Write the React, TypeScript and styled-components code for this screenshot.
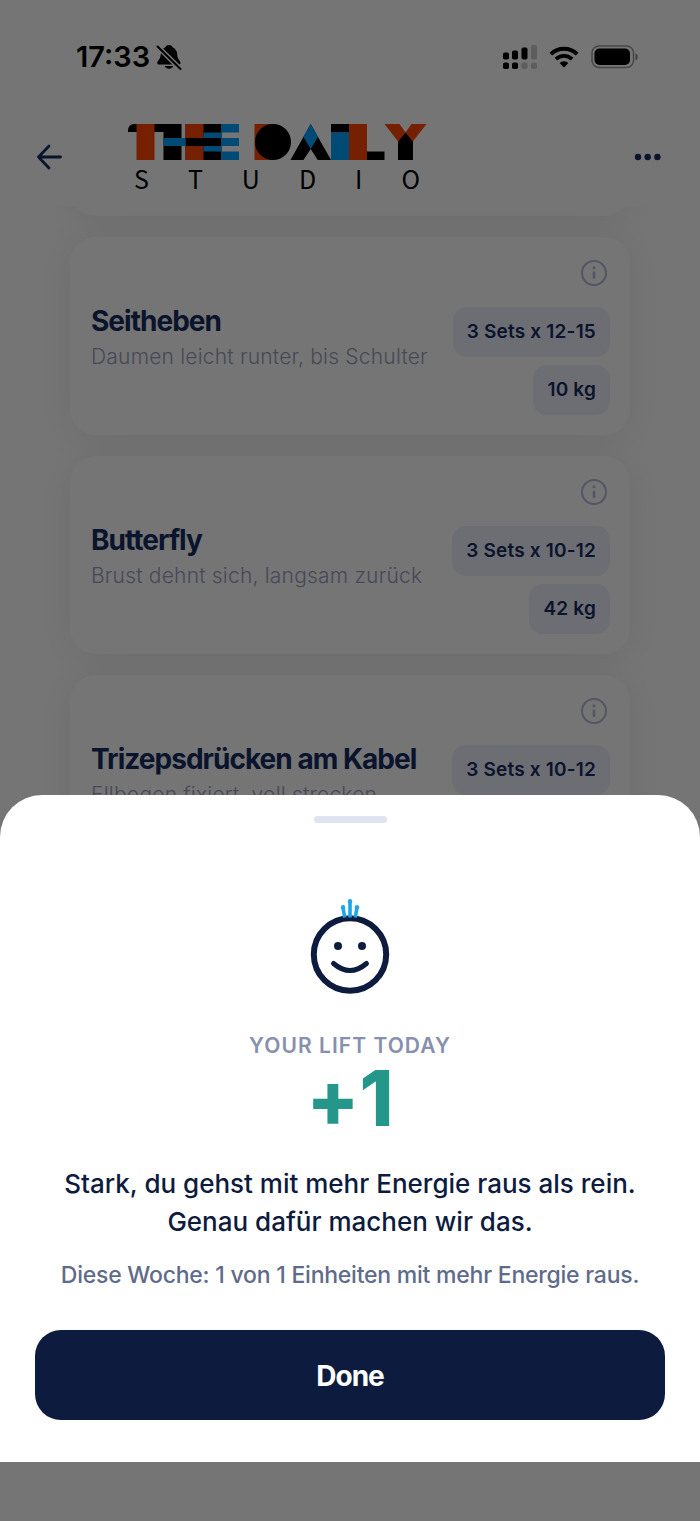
import React from "react";
import styled, { createGlobalStyle } from "styled-components";

const GlobalStyle = createGlobalStyle`
  *, *::before, *::after { box-sizing: border-box; }
  body {
    margin: 0;
    background: #ffffff;
    color: #0d1b3e;
    font-family: Inter, "Liberation Sans", sans-serif;
    -webkit-font-smoothing: antialiased;
  }
  h1, h2, p, ul { margin: 0; padding: 0; }
  button { font: inherit; color: inherit; border: 0; background: none; padding: 0; cursor: pointer; }
`;

const Screen = styled.div`
  min-height: 100vh;
  overflow: hidden;
  color: #162c62;
`;

const TopArea = styled.header`
  position: relative;
  z-index: 1;
  background: #ffffff;
`;

const StatusBar = styled.div`
  display: flex;
  align-items: center;
  justify-content: space-between;
  height: 114px;
  padding: 0 61px 0 76px;
  color: #000000;
`;

const StatusGroup = styled.div<{ $gap: number }>`
  display: flex;
  align-items: center;
  gap: ${({ $gap }) => $gap}px;
`;

const Clock = styled.time`
  font-size: 29px;
  line-height: 36px;
  font-weight: 600;
`;

const NavBar = styled.nav`
  display: grid;
  grid-template-columns: 92px 1fr 92px;
  align-items: start;
  height: 92px;
  padding: 8px 38px 0 36px;
`;

const IconButton = styled.button<{ $end?: boolean }>`
  display: flex;
  align-items: center;
  justify-content: ${({ $end }) => ($end ? "flex-end" : "flex-start")};
  height: 69px;
`;

const Brand = styled.div`
  width: 300px;
`;

const Wordmark = styled.svg`
  display: block;
  margin-top: 2px;
`;

const BrandSub = styled.div`
  display: flex;
  justify-content: space-between;
  padding: 0 8px 0 6px;
  color: #000000;
  font-family: "Noto Sans CJK JP", "Noto Sans", sans-serif;
  font-size: 25px;
  line-height: 36px;
`;

const Cards = styled.ul`
  display: flex;
  flex-direction: column;
  gap: 21px;
  margin: -50px 70px 0;
  list-style: none;
`;

const Card = styled.li`
  display: grid;
  grid-template-columns: 1fr auto;
  align-items: center;
  height: 198px;
  padding: 0 20px;
  border-radius: 26px;
  background: #ffffff;
  box-shadow: 0 4px 40px rgba(0, 0, 0, 0.08);
`;

const ScrolledCard = styled(Card)`
  height: 60px;
  border-radius: 0 0 26px 26px;
`;

const Exercise = styled.div`
  padding: 6px 0 0 1px;
`;

const ExerciseName = styled.h2`
  font-size: 28px;
  line-height: 36px;
  font-weight: 700;
  letter-spacing: -0.035em;
`;

const ExerciseHint = styled.p`
  color: #9aa0be;
  font-size: 21px;
  line-height: 36px;
  font-weight: 300;
  letter-spacing: 0.01em;
`;

const Meta = styled.div`
  display: flex;
  flex-direction: column;
  align-self: start;
  align-items: flex-end;
  gap: 8px;
  padding-top: 22px;
`;

const InfoButton = styled.button`
  display: flex;
  margin: 0 2px 12px 0;
`;

const Pill = styled.span`
  padding: 0 14px;
  border-radius: 14px;
  background: #eef0fa;
  font-size: 19px;
  line-height: 50px;
  font-weight: 600;
  letter-spacing: 0.01em;
  white-space: nowrap;
`;

const Backdrop = styled.div`
  position: fixed;
  inset: 0;
  z-index: 2;
  display: flex;
  flex-direction: column;
  justify-content: flex-end;
  padding-bottom: 59px;
  background: rgba(0, 0, 0, 0.54);
`;

const Sheet = styled.section`
  display: flex;
  flex-direction: column;
  align-items: center;
  padding: 21px 35px 42px;
  border-radius: 42px 42px 0 0;
  background: #ffffff;
  text-align: center;
`;

const Grabber = styled.div`
  width: 73px;
  height: 7px;
  margin-bottom: 74px;
  border-radius: 4px;
  background: #e0e4f0;
`;

const Eyebrow = styled.p`
  margin-top: 37px;
  color: #8790ad;
  font-size: 21px;
  line-height: 28px;
  font-weight: 600;
  letter-spacing: 0.05em;
`;

const Score = styled.p`
  color: #24978a;
  font-size: 77px;
  line-height: 76px;
  font-weight: 800;
  font-variant-ligatures: no-contextual;
`;

const Message = styled.h1`
  margin-top: 29px;
  font-size: 26px;
  line-height: 38px;
  font-weight: 500;
`;

const WeekNote = styled.p`
  margin-top: 18px;
  color: #5f6b8a;
  font-size: 23px;
  line-height: 32px;
  font-weight: 500;
  letter-spacing: -0.01em;
`;

const DoneButton = styled.button`
  align-self: stretch;
  height: 90px;
  margin-top: 39px;
  padding-top: 2px;
  border-radius: 26px;
  background: #0d1b3e;
  color: #ffffff;
  font-size: 28px;
  font-weight: 700;
  letter-spacing: -0.035em;
`;

const MutedBell = () => (
  <svg width="26" height="26" viewBox="0 0 26 26" aria-label="Silent mode" role="img">
    <mask id="bell-slash">
      <rect width="26" height="26" fill="#fff" />
      <path d="M0 1 26 26.500" stroke="#000" strokeWidth="5" />
    </mask>
    <g fill="#000" mask="url(#bell-slash)">
      <path d="M13 1c1.700 0 3 .9 3.500 2.200 3.200 1.300 4.700 4 4.700 7.500 0 4.600 3.300 5.600 3.300 8.300 0 1-.6 1.500-1.700 1.500H3C1.900 20.500 1.300 20 1.300 19c0-2.700 3.400-3.700 3.400-8.300 0-3.500 1.500-6.200 4.700-7.500C10 1.900 11.300 1 13 1z" />
      <path d="M8.800 22h8.400a4.300 3.500 0 0 1-8.400 0z" />
    </g>
    <path d="M1.500 2.500 24.500 25" stroke="#000" strokeWidth="2" strokeLinecap="round" />
  </svg>
);

const DualSignal = () => (
  <svg width="34" height="25" viewBox="0 0 34 25" aria-label="Signal" role="img">
    <g fill="#000">
      <rect x="0" y="7.500" width="6" height="7" rx="1.800" />
      <rect x="9" y="5.500" width="6" height="9" rx="1.800" />
      <rect x="18.500" y="2.500" width="6" height="12" rx="1.800" />
      <rect x="0" y="17.500" width="6" height="6.500" rx="1.800" />
      <rect x="9" y="17.500" width="6" height="6.500" rx="1.800" />
    </g>
    <g fill="#000" opacity=".2">
      <rect x="28" y="0" width="6" height="14.500" rx="1.800" />
      <rect x="18.500" y="17.500" width="6" height="6.500" rx="1.800" />
      <rect x="28" y="17.500" width="6" height="6.500" rx="1.800" />
    </g>
  </svg>
);

const Wifi = () => (
  <svg width="30" height="22" viewBox="0 0 30 22" aria-label="Wi-Fi" role="img">
    <g fill="none" stroke="#000" strokeWidth="3.800">
      <path d="M1.900 8.200a18.500 18.500 0 0 1 26.200 0" />
      <path d="M6.900 13.200a11.500 11.500 0 0 1 16.200 0" />
    </g>
    <path d="M15 21.500 10.600 17a6.300 6.300 0 0 1 8.800 0z" fill="#000" />
  </svg>
);

const Battery = () => (
  <svg width="48" height="24" viewBox="0 0 48 24" aria-label="Battery full" role="img">
    <rect x="1" y="1" width="41.500" height="21.500" rx="7" fill="none" stroke="#000" strokeOpacity=".4" strokeWidth="1.500" />
    <rect x="3.500" y="3.500" width="35.500" height="16.500" rx="5" fill="#000" />
    <path d="M44.500 8.200c3 1.300 3 6 0 7.300z" fill="#000" opacity=".45" />
  </svg>
);

const BackArrow = () => (
  <svg width="26" height="26" viewBox="0 0 26 26" fill="none" stroke="currentColor" strokeWidth="2.800" strokeLinecap="round" strokeLinejoin="round" aria-hidden="true">
    <path d="M24.500 13H2.500M13 2 2.500 13 13 24" />
  </svg>
);

const Dots = () => (
  <svg width="28" height="8" viewBox="0 0 28 8" fill="currentColor" aria-hidden="true">
    <circle cx="4" cy="4" r="3.200" />
    <circle cx="13.700" cy="4" r="3.200" />
    <circle cx="23.400" cy="4" r="3.200" />
  </svg>
);

const InfoIcon = () => (
  <svg width="28" height="28" viewBox="0 0 28 28" fill="none" stroke="#b4b9d8" strokeWidth="2" strokeLinecap="round" aria-hidden="true">
    <circle cx="14" cy="14" r="12" />
    <path d="M14 13.800v5" strokeWidth="2.600" />
    <circle cx="14" cy="8.700" r="1.500" fill="#b4b9d8" stroke="none" />
  </svg>
);

const DailyMark = () => (
  <Wordmark width="300" height="36" viewBox="0 0 300 36" role="img" aria-label="The Daily">
    <path d="M0 8V6a6 6 0 0 1 6-6h47.500v36H35.500V8z" fill="#000" />
    <path d="M8.500 0h18v36h-18z" fill="#ff4804" />
    <path d="M35.500 14h22v8h-22z" fill="#00a3ff" />
    <path d="M57.500 0h36v36h-36z" fill="#000" />
    <path d="M57.500 0h18v14h-18zM57.500 22h18v14h-18z" fill="#ff4804" />
    <path d="M75.500 8.500h18V14h-18zM75.500 22h18v5.500h-18z" fill="#00a3ff" />
    <path d="M93.500 0h17.500v8.500H93.500zM93.500 14h17.500v8H93.500zM93.500 27.500h17.500V36H93.500z" fill="#00a3ff" />
    <path d="M126.500 0h18v36h-18z" fill="#ff4804" />
    <circle cx="145" cy="18" r="18" fill="#000" />
    <path d="M182.700 0 203 36h-13.300L182.700 25 175.500 36h-13z" fill="#000" />
    <path d="M182.700 0 190 13l-7.300 12-7.300-12z" fill="#00a3ff" />
    <path d="M203 0h18v8.500h-18z" fill="#000" />
    <path d="M203 8.500h18V36h-18z" fill="#00a3ff" />
    <path d="M221 0h18v36h-18z" fill="#ff4804" />
    <path d="M239 27.500h17.500V36H239z" fill="#000" />
    <path d="M256.500 0h15l6 8.500L283.500 0h15l-14 18h-14z" fill="#ff4804" />
    <path d="M277.500 8.500 285 18v18h-15V18z" fill="#000" />
  </Wordmark>
);

const Smiley = () => (
  <svg width="80" height="98" viewBox="0 0 80 98" fill="none" role="img" aria-label="Smiling face">
    <circle cx="40" cy="57.500" r="36.200" stroke="#0d1b3e" strokeWidth="6" />
    <circle cx="28" cy="49" r="4" fill="#0d1b3e" />
    <circle cx="52" cy="49" r="4" fill="#0d1b3e" />
    <path d="M23.500 66.500q16.500 14 33 0" stroke="#0d1b3e" strokeWidth="5" strokeLinecap="round" />
    <g stroke="#1ea7e8" strokeWidth="3.600">
      <path d="M34.700 20.500 33 10.500M40 20.500V4.500M45.300 20.500 47 10.500" />
    </g>
    <g fill="#1ea7e8">
      <circle cx="33" cy="10.300" r="2.200" />
      <circle cx="40" cy="4.300" r="2.200" />
      <circle cx="47" cy="10.300" r="2.200" />
    </g>
  </svg>
);

const exercises = [
  { name: "Seitheben", hint: "Daumen leicht runter, bis Schulter", sets: "3 Sets x 12-15", weight: "10 kg" },
  { name: "Butterfly", hint: "Brust dehnt sich, langsam zurück", sets: "3 Sets x 10-12", weight: "42 kg" },
  { name: "Trizepsdrücken am Kabel", hint: "Ellbogen fixiert, voll strecken", sets: "3 Sets x 10-12", weight: "" },
];

export default function App() {
  return (
    <>
      <GlobalStyle />
      <Screen>
        <TopArea>
          <StatusBar>
            <StatusGroup $gap={6}>
              <Clock>17:33</Clock>
              <MutedBell />
            </StatusGroup>
            <StatusGroup $gap={12}>
              <DualSignal />
              <Wifi />
              <Battery />
            </StatusGroup>
          </StatusBar>
          <NavBar>
            <IconButton aria-label="Back"><BackArrow /></IconButton>
            <Brand>
              <DailyMark />
              <BrandSub>
                {"STUDIO".split("").map((letter) => <span key={letter}>{letter}</span>)}
              </BrandSub>
            </Brand>
            <IconButton $end aria-label="More"><Dots /></IconButton>
          </NavBar>
        </TopArea>
        <Cards>
          <ScrolledCard aria-hidden="true" />
          {exercises.map(({ name, hint, sets, weight }) => (
            <Card key={name}>
              <Exercise>
                <ExerciseName>{name}</ExerciseName>
                <ExerciseHint>{hint}</ExerciseHint>
              </Exercise>
              <Meta>
                <InfoButton aria-label={`About ${name}`}><InfoIcon /></InfoButton>
                <Pill>{sets}</Pill>
                {weight && <Pill>{weight}</Pill>}
              </Meta>
            </Card>
          ))}
        </Cards>
      </Screen>
      <Backdrop>
        <Sheet role="dialog" aria-modal="true" aria-labelledby="lift-message">
          <Grabber />
          <Smiley />
          <Eyebrow>YOUR LIFT TODAY</Eyebrow>
          <Score>+1</Score>
          <Message id="lift-message">
            Stark, du gehst mit mehr Energie raus als rein.<br />
            Genau dafür machen wir das.
          </Message>
          <WeekNote>Diese Woche: 1 von 1 Einheiten mit mehr Energie raus.</WeekNote>
          <DoneButton>Done</DoneButton>
        </Sheet>
      </Backdrop>
    </>
  );
}
